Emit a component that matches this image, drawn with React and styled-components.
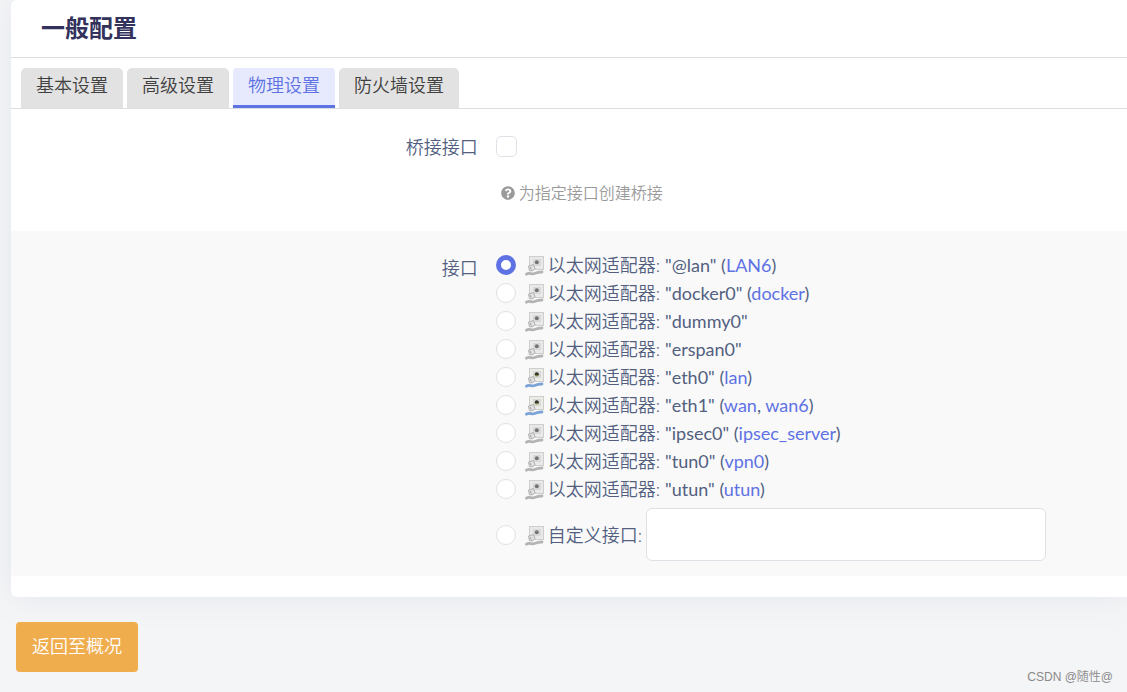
import React, { useState } from 'react';
import styled, { createGlobalStyle } from 'styled-components';
import { FaQuestionCircle } from 'react-icons/fa';

const tabs = ['基本设置', '高级设置', '物理设置', '防火墙设置'];

const devices = [
  { name: '@lan', networks: ['LAN6'] },
  { name: 'docker0', networks: ['docker'] },
  { name: 'dummy0', networks: [] },
  { name: 'erspan0', networks: [] },
  { name: 'eth0', networks: ['lan'], up: true },
  { name: 'eth1', networks: ['wan', 'wan6'], up: true },
  { name: 'ipsec0', networks: ['ipsec_server'] },
  { name: 'tun0', networks: ['vpn0'] },
  { name: 'utun', networks: ['utun'] },
];

const AdapterIcon = ({ up }) => (
  <CSSAdapter viewBox="0 0 20 20" aria-hidden="true">
    <rect x="4.5" y="0.5" width="14" height="13" fill={up ? '#ecece6' : '#e9e9e9'} stroke="#cecece" />
    <rect x="8" y="3" width="8" height="7" fill="#d9d9d7" />
    <circle cx="11.8" cy="6.3" r="2" fill={up ? '#33332d' : '#747474'} />
    {up && <path d="M10 7.7h3.600" stroke="#9a9340" />}
    <path
      d="M1.500 18.200c3-2.200 5 .6 8-.7 2.500-1.100 4.500-1.500 7.500-1.500"
      stroke={up ? '#7ba3d6' : '#b4b4b4'}
      strokeWidth="2.800"
      fill="none"
      strokeLinecap="round"
    />
    <path d="M3.500 10l5-1.500 1.500 4-2 2.300H4.500z" fill="#e0e0e0" stroke="#b0b0b0" />
    <path d="M5 11l1.200 2.500" stroke="#a0a0a0" />
  </CSSAdapter>
);

const App = () => {
  const [tab, setTab] = useState('物理设置');
  const [device, setDevice] = useState('@lan');

  return (
    <>
      <GlobalStyle />
      <CSSPanel>
        <CSSTitle>一般配置</CSSTitle>
        <CSSTabs>
          {tabs.map((name) => (
            <CSSTab key={name} type="button" $active={name === tab} onClick={() => setTab(name)}>
              {name}
            </CSSTab>
          ))}
        </CSSTabs>
        <CSSRow>
          <CSSLabel htmlFor="bridge">桥接接口</CSSLabel>
          <div>
            <CSSCheckbox id="bridge" type="checkbox" />
            <CSSHelp>
              <FaQuestionCircle size={14} />
              为指定接口创建桥接
            </CSSHelp>
          </div>
        </CSSRow>
        <CSSRow $shaded role="radiogroup" aria-labelledby="iface">
          <CSSLabel as="div" id="iface">
            接口
          </CSSLabel>
          <div>
            {devices.map(({ name, networks, up }) => (
              <CSSOption key={name}>
                <CSSRadio
                  id={`dev-${name}`}
                  type="radio"
                  name="device"
                  checked={device === name}
                  onChange={() => setDevice(name)}
                />
                <AdapterIcon up={up} />
                <label htmlFor={`dev-${name}`}>
                  以太网适配器:{' '}
                  <CSSDevice>
                    "{name}"
                    {networks.length > 0 && (
                      <>
                        {' ('}
                        {networks.map((network, i) => (
                          <React.Fragment key={network}>
                            {i > 0 && ', '}
                            <CSSLink href="#">{network}</CSSLink>
                          </React.Fragment>
                        ))}
                        )
                      </>
                    )}
                  </CSSDevice>
                </label>
              </CSSOption>
            ))}
            <CSSOption $custom>
              <CSSRadio
                id="dev-custom"
                type="radio"
                name="device"
                checked={device === 'custom'}
                onChange={() => setDevice('custom')}
              />
              <AdapterIcon />
              <label htmlFor="dev-custom">自定义接口:</label>
              <CSSInput type="text" aria-label="自定义接口" />
            </CSSOption>
          </div>
        </CSSRow>
      </CSSPanel>
      <CSSBack type="button">返回至概况</CSSBack>
      <CSSCredit>CSDN @随性@</CSSCredit>
    </>
  );
};

const GlobalStyle = createGlobalStyle`
  * {
    box-sizing: border-box;
  }
  body {
    margin: 0;
    background: #f4f5f7;
    color: #525f7f;
    font-family: Lato, 'Noto Sans CJK SC', sans-serif;
    font-size: 18px;
    font-weight: 350;
    line-height: 28px;
  }
  button, input {
    font: inherit;
  }
`;

const CSSPanel = styled.main`
  margin-left: 11px;
  padding-bottom: 21px;
  background: #fff;
  border-radius: 6px 0 0 6px;
  box-shadow: 0 0 32px rgba(136, 152, 170, 0.15);
`;

const CSSTitle = styled.h1`
  margin: 0;
  padding: 14px 30px 15px;
  border-bottom: 1px solid #dddddd;
  color: #32325d;
  font-size: 24px;
  font-weight: 700;
  line-height: 28px;
`;

const CSSTabs = styled.nav`
  display: flex;
  gap: 4px;
  padding: 10px 10px 0;
  border-bottom: 1px solid #dddddd;
`;

const CSSTab = styled.button`
  height: 40px;
  padding: 0 15px 3px;
  border: 0;
  border-bottom: 3px solid ${(props) => (props.$active ? '#5e72e4' : '#e2e2e2')};
  border-radius: ${(props) => (props.$active ? '4px 4px 0 0' : '5px 5px 0 0')};
  background: ${(props) => (props.$active ? '#e6eafc' : '#e2e2e2')};
  color: ${(props) => (props.$active ? '#5e72e4' : '#404040')};
  cursor: pointer;
`;

const CSSRow = styled.div`
  display: grid;
  grid-template-columns: 5fr 7fr;
  column-gap: 18px;
  padding: ${(props) => (props.$shaded ? '20px 0 15px 16px' : '24px 0 24px 16px')};
  background: ${(props) => (props.$shaded ? '#f9f9f9' : '#fff')};
`;

const CSSLabel = styled.label`
  text-align: right;
  padding-top: ${(props) => (props.as ? '3px' : '0')};
`;

const CSSCheckbox = styled.input`
  appearance: none;
  display: block;
  width: 21px;
  height: 21px;
  margin: 3px 0 0;
  border: 1px solid #dee2e6;
  border-radius: 5px;
  background: #fff;
`;

const CSSHelp = styled.div`
  display: flex;
  align-items: center;
  gap: 4px;
  margin-top: 22px;
  padding-left: 5px;
  color: #9a9a9a;
  font-size: 16px;
`;

const CSSOption = styled.div`
  display: flex;
  align-items: center;
  min-height: 28px;
  padding-top: ${(props) => (props.$custom ? '5px' : '0')};
`;

const CSSRadio = styled.input`
  appearance: none;
  flex: none;
  width: 20px;
  height: 20px;
  margin: 0 9px 0 0;
  border: 1px solid #dee2e6;
  border-radius: 50%;
  background: #fff;
  &:checked {
    border: 5px solid #5e72e4;
  }
`;

const CSSAdapter = styled.svg`
  flex: none;
  width: 20px;
  height: 20px;
  margin: 2px 3px 0 0;
`;

const CSSDevice = styled.span`
  font-weight: 400;
`;

const CSSLink = styled.a`
  color: #5e72e4;
  text-decoration: none;
`;

const CSSInput = styled.input`
  width: 400px;
  height: 53px;
  margin-left: 4px;
  padding: 0 12px;
  border: 1px solid #dee2e6;
  border-radius: 6px;
  background: #fff;
`;

const CSSBack = styled.button`
  display: block;
  margin: 25px 16px 20px;
  padding: 10px 16px 12px;
  border: 0;
  border-radius: 4px;
  background: #f0ad4e;
  color: #fff;
  cursor: pointer;
`;

const CSSCredit = styled.small`
  position: absolute;
  right: 14px;
  bottom: 5px;
  color: #8a8a8a;
  font-family: 'Liberation Sans', 'Noto Sans CJK SC', sans-serif;
  font-size: 12px;
  line-height: 20px;
`;

export default App;
